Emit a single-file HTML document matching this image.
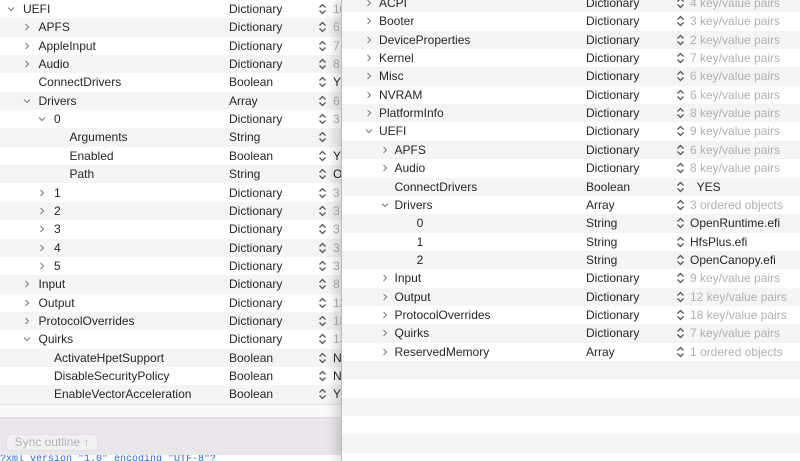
<!DOCTYPE html>
<html><head><style>
body{margin:0;width:800px;height:461px;overflow:hidden;background:#fff;font-family:"Liberation Sans",Arial,sans-serif;font-size:12px;color:#262626;position:relative}
.r{position:absolute;height:18.35px;line-height:18.35px;white-space:nowrap}
.g{background:#f4f4f4}
.t{position:absolute;top:0}
.v{color:#b0b0b0}
.chev{position:absolute;top:5px;width:8px;height:8px}
.st{position:absolute;top:3px;width:9px;height:12px}
#L{position:absolute;left:0;top:0;width:341px;height:461px;overflow:hidden}
#R{position:absolute;left:341px;top:0;width:459px;height:461px;overflow:hidden;background:#fff;border-left:1px solid #bbb;box-shadow:-6px 0 10px rgba(0,0,0,.15)}
</style></head><body>
<div id="L"></div>
<div id="R"></div>
<script>
const CR='<svg class="chev" viewBox="0 0 8 8" style="left:LEFTpx"><path d="M2.5 1 L5.5 4 L2.5 7" fill="none" stroke="#777" stroke-width="1"/></svg>';
const CD='<svg class="chev" viewBox="0 0 8 8" style="left:LEFTpx"><path d="M1 2.5 L4 5.5 L7 2.5" fill="none" stroke="#777" stroke-width="1"/></svg>';
const ST='<svg class="st" viewBox="0 0 9 12" style="left:LEFTpx"><path d="M1.5 4.5 L4.5 1.5 L7.5 4.5 M1.5 7.5 L4.5 10.5 L7.5 7.5" fill="none" stroke="#555" stroke-width="1.3"/></svg>';
function build(el,rows,o){
  let h='';
  rows.forEach((r,i)=>{
    const top=o.y0+i*18.35;
    const gray=(i%2==o.gp);
    const [d,ch,name,type,val,vc]=r;
    h+=`<div class="r${gray?' g':''}" style="top:${top}px;left:0;width:100%">`;
    if(ch) h+=(ch=='v'?CD:CR).replace('LEFT',o.cx+d*15.5);
    h+=`<span class="t" style="left:${o.nx+d*15.5}px">${name}</span>`;
    h+=`<span class="t" style="left:${o.tx}px">${type}</span>`;
    if(type) h+=ST.replace('LEFT',o.sx);
    h+=`<span class="t ${vc?'v':''}" style="left:${o.vx}px">${val}</span></div>`;
  });
  el.innerHTML=h+(o.extra||'');
}
const D='Dictionary';
build(document.getElementById('L'),[
[0,'v','UEFI',D,'10',1],[1,'>','APFS',D,'6',1],[1,'>','AppleInput',D,'7',1],[1,'>','Audio',D,'8',1],
[1,'','ConnectDrivers','Boolean','Y'],[1,'v','Drivers','Array','6',1],[2,'v','0',D,'3',1],
[3,'','Arguments','String',''],[3,'','Enabled','Boolean','Y'],[3,'','Path','String','O'],
[2,'>','1',D,'3',1],[2,'>','2',D,'3',1],[2,'>','3',D,'3',1],[2,'>','4',D,'3',1],[2,'>','5',D,'3',1],
[1,'>','Input',D,'8',1],[1,'>','Output',D,'12',1],[1,'>','ProtocolOverrides',D,'18',1],[1,'v','Quirks',D,'13',1],
[2,'','ActivateHpetSupport','Boolean','N'],[2,'','DisableSecurityPolicy','Boolean','N'],[2,'','EnableVectorAcceleration','Boolean','Y']
],{y0:0,gp:1,cx:7,nx:23,tx:229,sx:318,vx:333,extra:`
<div style="position:absolute;top:404px;left:0;width:341px;height:13px;border-top:1px solid #e4e4e4;background:#fafafa"></div>
<div style="position:absolute;top:417px;left:0;width:341px;height:38px;background:#ebe6ec;border-top:1px solid #ddd"></div>
<div style="position:absolute;top:434px;left:6px;width:90px;height:15px;background:#f2eff3;border:1px solid #e2dfe3;border-radius:4px;color:#b5b2b6;font-size:12px;line-height:15px;text-align:center">Sync outline &#8593;</div>
<div style="position:absolute;top:455px;left:0;width:341px;height:6px;background:#fff;overflow:hidden;color:#2a6ad8;font-family:'Liberation Mono',monospace;font-size:10px;line-height:10px">?xml version "1.0" encoding "UTF-8"?</div>`});
build(document.getElementById('R'),[
[0,'>','ACPI',D,'4 key/value pairs',1],[0,'>','Booter',D,'3 key/value pairs',1],[0,'>','DeviceProperties',D,'2 key/value pairs',1],
[0,'>','Kernel',D,'7 key/value pairs',1],[0,'>','Misc',D,'6 key/value pairs',1],[0,'>','NVRAM',D,'6 key/value pairs',1],
[0,'>','PlatformInfo',D,'8 key/value pairs',1],[0,'v','UEFI',D,'9 key/value pairs',1],[1,'>','APFS',D,'6 key/value pairs',1],
[1,'>','Audio',D,'8 key/value pairs',1],[1,'','ConnectDrivers','Boolean','&nbsp;&nbsp;YES'],[1,'v','Drivers','Array','3 ordered objects',1],
[2,'','&nbsp;&nbsp;0','String','OpenRuntime.efi'],[2,'','&nbsp;&nbsp;1','String','HfsPlus.efi'],[2,'','&nbsp;&nbsp;2','String','OpenCanopy.efi'],
[1,'>','Input',D,'9 key/value pairs',1],[1,'>','Output',D,'12 key/value pairs',1],[1,'>','ProtocolOverrides',D,'18 key/value pairs',1],
[1,'>','Quirks',D,'7 key/value pairs',1],[1,'>','ReservedMemory','Array','1 ordered objects',1],
[0,'','','','',0],[0,'','','','',0],[0,'','','','',0],[0,'','','','',0],[0,'','','','',0]
],{y0:-6,gp:0,cx:23,nx:37,tx:244,sx:334,vx:348});
</script>
</body></html>
